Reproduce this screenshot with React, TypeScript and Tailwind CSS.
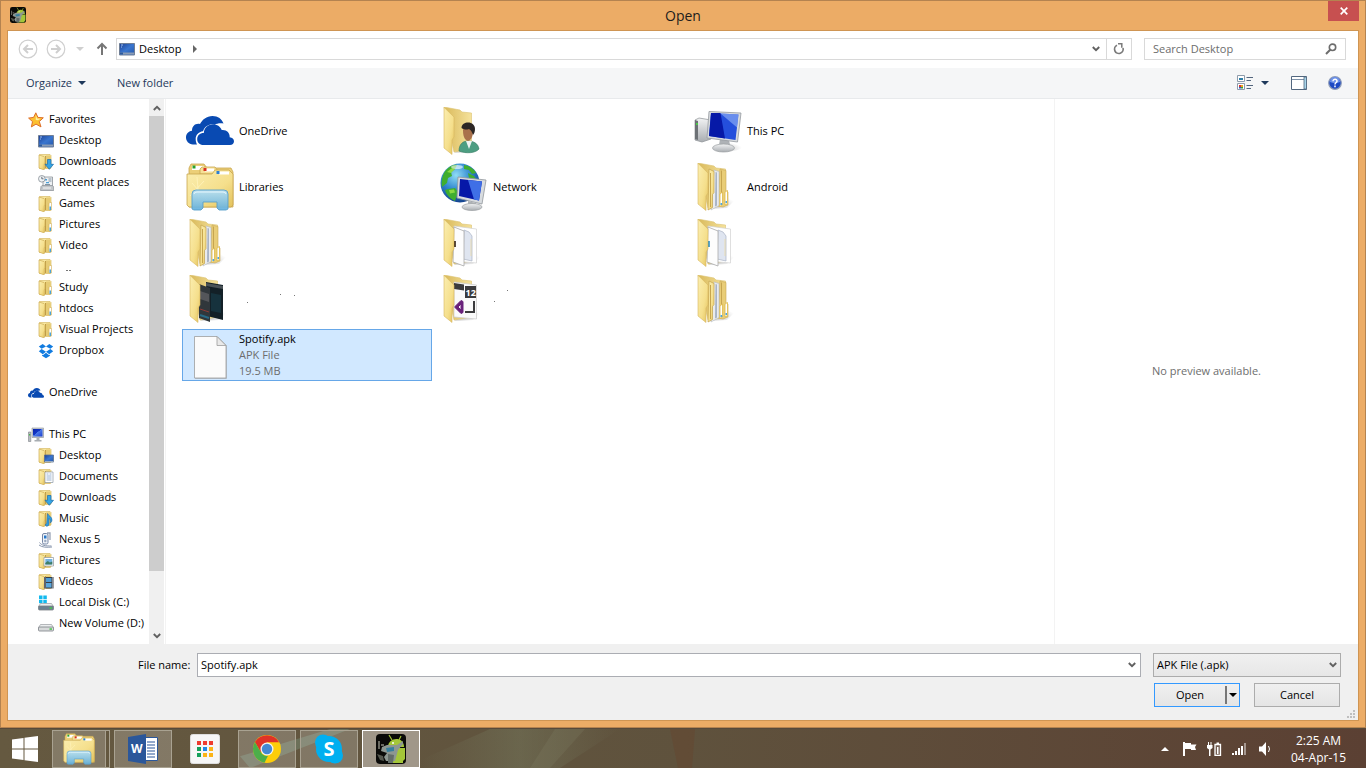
import React from 'react';
import clsx from 'clsx';

type IconProps = { className?: string };

const Defs: React.FC = () => (
  <svg width="0" height="0" className="absolute" aria-hidden="true">
    <defs>
      <linearGradient id="flap" x1="0" y1="0" x2="1" y2="1">
        <stop offset="0" stopColor="#fbeeb0" />
        <stop offset="0.6" stopColor="#f5df8c" />
        <stop offset="1" stopColor="#e3c25c" />
      </linearGradient>
      <linearGradient id="back" x1="0" y1="0" x2="1" y2="0">
        <stop offset="0" stopColor="#d9b95a" />
        <stop offset="1" stopColor="#f5e29c" />
      </linearGradient>
      <linearGradient id="screen" x1="0" y1="0" x2="1" y2="1">
        <stop offset="0" stopColor="#0a23a8" />
        <stop offset="0.45" stopColor="#1438c8" />
        <stop offset="0.46" stopColor="#4d7ae8" />
        <stop offset="1" stopColor="#1b3fd0" />
      </linearGradient>
      <linearGradient id="desk" x1="0" y1="0" x2="1" y2="1">
        <stop offset="0" stopColor="#1c3f94" />
        <stop offset="0.5" stopColor="#3a76cf" />
        <stop offset="1" stopColor="#2456a8" />
      </linearGradient>
      <linearGradient id="metal" x1="0" y1="0" x2="0" y2="1">
        <stop offset="0" stopColor="#f2f3f4" />
        <stop offset="1" stopColor="#a9adb1" />
      </linearGradient>
      <linearGradient id="glass" x1="0" y1="0" x2="0" y2="1">
        <stop offset="0" stopColor="#b5dff3" />
        <stop offset="1" stopColor="#62b0de" />
      </linearGradient>
      <radialGradient id="globe" cx="0.4" cy="0.3" r="0.75">
        <stop offset="0" stopColor="#8fdcf5" />
        <stop offset="0.5" stopColor="#2f86cf" />
        <stop offset="1" stopColor="#103a86" />
      </radialGradient>
      <radialGradient id="shade" cx="0.2" cy="0.7" r="0.8">
        <stop offset="0" stopColor="#8a8a8a" stopOpacity="0.5" />
        <stop offset="1" stopColor="#8a8a8a" stopOpacity="0" />
      </radialGradient>
    </defs>
  </svg>
);

/* ---------- 16px icons ---------- */

const SmallFolder: React.FC<{ children?: React.ReactNode }> = ({ children }) => (
  <svg viewBox="0 0 16 16" className="size-4 shrink-0">
    <path d="M1.500.500h10.500l1 1v12.500l-1 .5H1.500z" fill="url(#flap)" stroke="#d8bb68" strokeWidth=".7" />
    <path d="M8 1.500h4.500v12.500H8z" fill="#e6cb74" />
    <path d="M7.500 2v12" stroke="#bf9d47" />
    <path d="M1 1 6 2.500l1 1v5.500l-.7.8v5.700H5L1 14z" fill="url(#flap)" stroke="#cfae55" strokeWidth=".7" />
    {children || (
      <>
        <path d="M11 7.500 12 6.500h1.500V14H11z" fill="#fff" stroke="#d3b25c" strokeWidth=".6" />
        <path d="M11.500 10.500H13V14h-1.500z" fill="#4aa3d8" />
      </>
    )}
  </svg>
);

const StarIcon = () => (
  <svg viewBox="0 0 16 16" className="size-4 shrink-0">
    <path d="M7.800.8 9.900 5.400l5.400.4-4 3.700 1.700 5.400-5-2.800-4.600 2.800 1.100-5.300L.6 6.100l5-.7z" fill="#fcc030" stroke="#dd6f2a" strokeWidth="1" strokeLinejoin="round" />
    <path d="m7.800 3 1.300 3.400 3.500.3-2.700 1.600L7.800 8z" fill="#fff0a0" />
  </svg>
);

const DesktopIcon = () => (
  <svg viewBox="0 0 16 16" className="size-4 shrink-0">
    <path d="M.5 2.500h15v11.500H.5z" fill="url(#desk)" stroke="#707f96" />
    <path d="M1 11.500h14v2H1z" fill="#8b9cb4" />
    <path d="M1 11.500h3v2H1z" fill="#2d5b9e" />
    <path d="M2 3.500h2v1H2zM2 5.500h1v1H2z" fill="#a3c3f0" />
  </svg>
);

const DownArrow = () => (
  <path d="M9.500 5.500h3.500v4.800h2.500L11.300 15.300 7 10.300h2.500z" fill="#35a5e5" stroke="#1a6cab" strokeWidth=".7" />
);

const RecentIcon = () => (
  <svg viewBox="0 0 16 16" className="size-4 shrink-0">
    <path d="M5 2h9.500v10H5z" fill="#eef1f4" stroke="#8b9298" strokeWidth=".8" />
    <path d="M7 4h2v1.500H7zM8 7h3v1.200H8z" fill="#4aa0d6" />
    <path d="M10.500 4h3M10.500 6h3M7 9.500h5" stroke="#8394a3" />
    <path d="m3 11.500 1-1h10.500l1.200 1.500v3.500H2.500z" fill="#c2c6ca" stroke="#888e93" strokeWidth=".7" />
    <path d="M5 13h8" stroke="#f7f7f7" />
    <circle cx="3.800" cy="3.800" r="3.300" fill="#f1f4f6" stroke="#888f97" strokeWidth=".8" />
    <path d="M3.800 1.800v2h1.700" fill="none" stroke="#46525f" strokeWidth=".8" />
  </svg>
);

const DropboxIcon = () => (
  <svg viewBox="0 0 16 16" className="size-4 shrink-0" fill="#127ce0">
    <path d="M4.700 1 .8 3.600l2.800 2.200L8 3.500zM11.300 1l3.900 2.600-2.800 2.200L8 3.500zM.8 8.200l2.800-2.100L8 8.700 4.700 11.300zM15.200 8.200l-2.800-2.100L8 8.700l3.300 2.600zM4 11.800l.8.500L8 9.700l3.200 2.600.8-.5v1L8 15.200l-4-2.400z" />
  </svg>
);

const CloudIcon: React.FC<IconProps> = ({ className }) => (
  <svg viewBox="0 0 48 48" className={clsx('shrink-0', className)} fill="#094ab2">
    <path d="M11 37.500H7C2.500 37 0 34 0 30.500c0-3.500 2.300-6.400 6-6.800C6 19 9.500 16 14 17c2.300-4.300 6.500-8 12.500-8 5.500 0 9.500 3 11 7.500-4-.5-7 .2-8.800 1.200-3.800-1.200-9.500.6-11.700 6.600-4.500.5-7.500 4-7.300 8 0 2 .5 3.800 1.300 5.200z" />
    <path d="M17.500 38c-4 0-6.300-2.700-6.300-5.800 0-3.600 2.800-6.200 6.600-6.100C18 21 22 17.300 27 17.300c4 0 7.500 2.300 8.700 5.700 4.800-.6 8.300 2.800 8 7.200 2.600.3 4.300 1.800 4.300 4 0 2.300-1.600 3.800-4 3.800z" />
  </svg>
);

const SmallPcIcon = () => (
  <svg viewBox="0 0 16 16" className="size-4 shrink-0">
    <path d="M.5 5h2.300v9.500H.5z" fill="#b8bcc0" stroke="#7c8186" strokeWidth=".6" />
    <path d="M1 7h1.300v1.500H1z" fill="#48b648" />
    <path d="M4 1h11.500v9.500H4z" fill="#c9cdd2" stroke="#8c9197" strokeWidth=".6" />
    <path d="M5 2h9.500v7.500H5z" fill="url(#screen)" />
    <path d="M8.500 11h3v2h2v1.500H6.500V13h2z" fill="#a8adb2" />
  </svg>
);

const NexusIcon = () => (
  <svg viewBox="0 0 16 16" className="size-4 shrink-0">
    <path d="M9 1h3v7" fill="none" stroke="#98a3b5" strokeWidth="1.300" />
    <rect x="4.500" y="1.500" width="5.500" height="10.500" rx="1.500" fill="#eef2f8" stroke="#7687a5" />
    <path d="M6 3.500h2.500v3H6z" fill="#2778c9" />
    <circle cx="7.300" cy="9" r="1.200" fill="#9aa9bf" />
    <path d="M1.500 10.500c2 3 6 3.500 12 3.500M1 13c3 2.500 8 2.500 13 2" fill="none" stroke="#8896ae" />
  </svg>
);

const DiskIcon: React.FC<{ system?: boolean }> = ({ system }) => (
  <svg viewBox="0 0 16 16" className="size-4 shrink-0">
    {system && <path d="M1 .5h3.500V4H1zM5.300.5h3.500V4H5.300zM1 4.800h3.500v3.500H1zM5.300 4.800h3.500v3.500H5.300z" fill="#12b9ee" />}
    <path d="m.5 11.500 2-3h11l2 3z" fill="#eceeef" stroke="#8a8e92" strokeWidth=".6" />
    <rect x=".5" y="11" width="15" height="4" rx="1" fill={system ? '#6c8190' : '#d8dadb'} stroke="#7b8085" strokeWidth=".8" />
    <path d="M11.500 12.300h2.500v1.500h-2.500z" fill="#46c84a" />
  </svg>
);

const DocOverlay = () => (
  <>
    <path d="M7 3h8v10.500H7z" fill="#fff" stroke="#8d99a8" strokeWidth=".7" />
    <path d="M8.500 5h2M8.500 7h5M8.500 9h5M8.500 11h5M11.500 5h2" stroke="#7da0c8" strokeWidth=".8" />
  </>
);

const MusicOverlay = () => (
  <path d="M9.500 2.500c1 2.500 4.500 3 4.500 6.500 0 1.500-1 2.500-1.800 3 .5-2 0-3.500-1.200-4.500v5.500c0 1.500-1.200 2.300-2.500 2.200-1.500-.2-1.700-2 .2-2.700z" fill="#2f9de0" stroke="#185f9e" strokeWidth=".5" />
);

const PictureOverlay = () => (
  <>
    <path d="M6 4.500h9.500V13H6z" fill="#fff" stroke="#8f969c" strokeWidth=".7" />
    <path d="M7.300 6h7v5.500h-7z" fill="#71b3e2" />
    <path d="m7.300 10 2.500-2 2 1.500 2.500-1v3h-7z" fill="#3d7d6a" />
  </>
);

const VideoOverlay = () => (
  <>
    <path d="M6 3h9.500v11.500H6z" fill="#383e46" />
    <path d="M8 4h5.500v4H8z" fill="#4d9bd4" />
    <path d="M8 9h5.500v4.500H8z" fill="#5aa7dc" />
    <path d="M7 3.500v11M14.500 3.500v11" stroke="#d6dbe0" strokeDasharray="1 1" />
  </>
);

const DesktopOverlay = () => (
  <>
    <path d="M6.500 7h9v7h-9z" fill="url(#desk)" stroke="#5c708e" strokeWidth=".8" />
    <path d="M7 13h8.500v1H7z" fill="#9aacc3" />
  </>
);

/* ---------- 48px icons ---------- */

const BigFolder: React.FC<{ children?: React.ReactNode }> = ({ children }) => (
  <svg viewBox="0 0 48 48" className="size-12 shrink-0">
    <path d="m14 46 16-12 12 2-9 9z" fill="url(#shade)" />
    <path d="m4 0 16 3 2 2 9.500 1v36l-17.500 3z" fill="url(#back)" stroke="#dcc271" strokeWidth=".6" />
    {children}
    <path d="m4 .3 10 9.700v20l-2 3v14.500L4 41z" fill="url(#flap)" stroke="#d6b75f" strokeWidth=".6" strokeLinejoin="round" />
  </svg>
);

const NestedFolders = () => (
  <>
    <path d="m26 6 6 1.500V28l2 1v13l-5 2-5-1z" fill="#e9cd77" stroke="#c9aa55" strokeWidth=".6" />
    <path d="m20 7 5 1.500v34L17 47z" fill="#e9ebee" stroke="#b9bdc2" strokeWidth=".6" />
    <path d="m21.500 9 1.500.5v33l-2 1z" fill="#a9b4c6" />
    <path d="m15 6 5 2.500v21l-1.500 2v13L14 47z" fill="url(#flap)" stroke="#c4a44e" strokeWidth=".7" />
    <path d="M16.500 10v34M27.500 7.500V30" stroke="#c6a550" />
    <path d="m26 31 2.500-2v13L26 43.500zM31 29l2.500-1.500v13L31 42z" fill="#fff" stroke="#e0ba48" strokeWidth=".8" />
    <path d="M26.500 40h1.700v2h-1.700zM31.500 38h1.500v2h-1.500z" fill="#4ba5e0" />
  </>
);

const Papers: React.FC<{ accent: string }> = ({ accent }) => (
  <>
    <path d="m14 7 22.500 3v34L14 42z" fill="#fff" stroke="#d1d1d1" strokeWidth=".7" />
    <path d="m24 11 5 2 3 4v25l-9-2z" fill="#dfe5f0" stroke="#aab3c4" strokeWidth=".7" />
    <path d="m14 8 10 4v35L13 43z" fill="#fdfdfd" stroke="#a9a9a9" strokeWidth=".8" />
    <path d="M14 22h1.800v6H14z" fill={accent} />
    <path d="M31 20v17" stroke="#ecdca6" strokeWidth=".8" />
  </>
);

const PhotoPages = () => (
  <>
    <path d="m20 7 17 3v35l-16-4z" fill="#132027" />
    <path d="m20 8 17 3v3L20 11z" fill="#4a5358" />
    <path d="m25 18 10 2v18l-10-2z" fill="#16323d" />
    <path d="m13 9 11 4v34l-11-4z" fill="#30373b" />
    <path d="m14 16 9 3v8l-9-3z" fill="#54565a" />
    <path d="m14 34 9 3" stroke="#8f3a35" />
    <path d="m14 40 9 3" stroke="#286a85" strokeWidth="2" />
  </>
);

const VisualStudioPage = () => (
  <>
    <path d="m14 7 22.500 3v34L14 42z" fill="#fafafa" stroke="#c9c9c9" strokeWidth=".7" />
    <path d="m14 8 10 1.500v6L14 14z" fill="#3b3b3d" />
    <path d="M25 11h11v12H25z" fill="#3b3b3d" />
    <text x="25.500" y="20.500" fontSize="9" fontWeight="700" fill="#fff" fontFamily="Open Sans, sans-serif">12</text>
    <path d="M34 26v11H25" fill="none" stroke="#3b3b3d" strokeWidth="2" />
    <path d="m15 31.500 6-6 2 1v11l-2 1-6-6zm6-2.500-3 3 3 3z" fill="#68217a" fillRule="evenodd" stroke="#68217a" />
  </>
);

const PersonOverlay = () => (
  <>
    <path d="M19 44c0-7 4-10 9-10s10 2 11 8c-3 4-13 5-20 2z" fill="#4d9e82" stroke="#327a61" strokeWidth=".6" />
    <path d="m26 34 3 8 3-8z" fill="#eef3f1" />
    <path d="M23 23c0-5 9-5 10 0 0 5-1 10-5 11-4-1-5-6-5-11z" fill="#a9714b" />
    <path d="M21.500 21c0-4 3.500-5.500 6.500-5.500 4 0 7 2.500 7 6.500 0 3-1 5-2 6-1-3-2-5-4-6-3 1-5 .5-7.500-1z" fill="#2c2725" />
  </>
);

const LibrariesIcon: React.FC<IconProps> = ({ className }) => (
  <svg viewBox="0 0 48 48" className={clsx('shrink-0', className)}>
    <path d="M3 44V5l2-4h13l3 4h24l2 4v35z" fill="#eccf78" stroke="#c9a64e" strokeWidth=".8" />
    <path d="M6 3h12v4H6z" fill="#fff" />
    <path d="M6.500 2.500h3v3h-3z" fill="#2ba02b" />
    <path d="M14 9V6l2-2h13l3 4v3H14z" fill="#f6e096" stroke="#c9a64e" strokeWidth=".8" />
    <path d="M19 5.500h9v3h-9z" fill="#fff" />
    <path d="M17.500 5h3v3h-3z" fill="#d9321f" />
    <path d="M1 11h25l3-4h14l4 4v31l-2 2H3l-2-2z" fill="url(#flap)" stroke="#c9a64e" strokeWidth=".8" />
    <path d="M33 8.500h10v3H33z" fill="#fff" />
    <path d="M30.500 8h3v3h-3z" fill="#2d7fd1" />
    <path d="m4 33 14-15M6 20l15 17M11 14l2 24" stroke="#fff4be" strokeWidth=".8" />
    <path d="M6 46V31q0-4 4-4h28q4 0 4 4v15l-2 1h-7l-2-2v-6H17v6l-2 2H8z" fill="url(#glass)" stroke="#5a9fca" strokeWidth=".9" fillOpacity=".93" />
    <path d="M8 31q0-2 3-2h26q3 0 3 2" fill="none" stroke="#e6f7ff" />
  </svg>
);

const ThisPcIcon = () => (
  <svg viewBox="0 0 48 48" className="size-12 shrink-0">
    <ellipse cx="36" cy="40" rx="12" ry="4" fill="url(#shade)" />
    <path d="m1 13 4-2 12 2v19l-9 3-7-2z" fill="url(#metal)" stroke="#8b8f93" strokeWidth=".7" />
    <path d="m1 13 3 1v19l-3-1z" fill="#6c7175" />
    <path d="M2 16h2v2H2z" fill="#4dc74a" />
    <path d="m26 32 9 1 1 5H25z" fill="#aeb2b6" />
    <path d="m15 4.500 32 1.500-3.500 29L13 31z" fill="#d9dcdf" stroke="#94999e" strokeWidth=".8" />
    <path d="m17 6 27.500 1.500L41.500 33 15 29z" fill="#244fdc" />
    <path d="M17 6h9.500l4.500 25.400L15 29z" fill="#0619a7" />
    <path d="m26.500 6.500 18 1-1.500 13z" fill="#87a9f3" fillOpacity=".7" />
    <ellipse cx="29.500" cy="41" rx="11" ry="4" fill="url(#metal)" stroke="#999da1" strokeWidth=".7" />
  </svg>
);

const NetworkIcon = () => (
  <svg viewBox="0 0 48 48" className="size-12 shrink-0">
    <circle cx="20" cy="20" r="19.500" fill="url(#globe)" />
    <path d="M4 10C8 4 13 1 17 2l-2 4-4 3 1 4-4 2-1 5-5 4c-1-4 0-10 2-14zM24 2c6 1 10 4 12 8l-4 1-3-4-5-1zM8 26l7-1 3 4-3 9c-5-2-9-7-10-11zM28 10l6 3 2 3-7-1z" fill="#3fae2f" />
    <path d="M7 9 12 5l3 1-4 4zM9 27l5-.5 1 3-5 1z" fill="#8bd943" />
    <ellipse cx="17" cy="4" rx="6" ry="2" fill="#fff" fillOpacity=".6" />
    <path d="m18 14 28 3-4 24-25-6z" fill="#d8dce0" stroke="#92979c" strokeWidth=".8" />
    <path d="m20 16 22 2.500-3 19L19 33z" fill="#0618a8" />
    <path d="m28 17 14 1.500-3 19-5-1z" fill="#3f6fe6" />
    <path d="m28 38 8 2v4h-8z" fill="#aeb2b6" />
    <ellipse cx="32" cy="44" rx="10" ry="3.500" fill="url(#metal)" stroke="#999da1" strokeWidth=".7" />
  </svg>
);

const BlankFileIcon = () => (
  <svg viewBox="0 0 48 48" className="size-12 shrink-0">
    <path d="M9 6h23l9 9v33H9z" fill="#9c9c9c" fillOpacity=".5" />
    <path d="M8.500 5.500h22.500l9 9v32.500H8.500z" fill="#fbfbfb" stroke="#9d9d9d" strokeWidth=".8" />
    <path d="M31 5.500v9h9z" fill="#e9e9e9" stroke="#9d9d9d" strokeWidth=".8" />
  </svg>
);

const AppIcon: React.FC<IconProps> = ({ className }) => (
  <svg viewBox="0 0 30 30" className={clsx('shrink-0', className)}>
    <rect width="30" height="30" rx="4" fill="#0a0a08" />
    <path d="M3 7v8M5 11h3" stroke="#c7c7ba" />
    <path d="m13 1 3 5M25 2l-2 4" stroke="#a4c639" strokeWidth="1.200" />
    <path d="M12 13c0-10 16-11 16 0z" fill="#a4c639" />
    <path d="M13 14h16v11l-2 2v2H14z" fill="#a4c639" />
    <path d="m6 13 5-2h10l6-4v3l-5 6-3 11h-9l-2-4 3-4-6-2z" fill="#8d9791" />
    <path d="m10 14 8-1v4l-7 1z" fill="#367f9d" />
    <path d="m12 20 6 1-1 8h-5z" fill="#636d69" />
    <path d="m1 20 6 2 1 5-4-1z" fill="#55584f" />
    <circle cx="17" cy="9" r="1" fill="#fff" />
  </svg>
);

/* ---------- small glyphs ---------- */

const Chevron: React.FC<IconProps & { up?: boolean }> = ({ className, up }) => (
  <svg viewBox="0 0 8 6" className={clsx('h-1.5 w-2', className)}>
    <path d={up ? 'M.8 5 4 1.800 7.200 5' : 'M.8 1 4 4.200 7.200 1'} fill="none" stroke="#606060" strokeWidth="1.900" />
  </svg>
);

const Triangle: React.FC<IconProps> = ({ className }) => (
  <svg viewBox="0 0 8 4" className={clsx('h-1 w-2', className)}>
    <path d="M0 0h8L4 4z" fill="currentColor" />
  </svg>
);

// Leftover dots of the hidden labels
const Specks: React.FC<{ points: number[][] }> = ({ points }) => (
  <svg viewBox="0 0 80 20" className="h-5 w-20" shapeRendering="crispEdges" aria-hidden="true">
    {points.map(([x, y]) => (
      <rect key={`${x}-${y}`} x={x} y={y} width="1" height="1" fill="#777" />
    ))}
  </svg>
);

type TreeItem = { label: string; icon: React.ReactNode; root?: boolean };

const tree: TreeItem[][] = [
  [
    { label: 'Favorites', icon: <StarIcon />, root: true },
    { label: 'Desktop', icon: <DesktopIcon /> },
    { label: 'Downloads', icon: <SmallFolder><DownArrow /></SmallFolder> },
    { label: 'Recent places', icon: <RecentIcon /> },
    { label: 'Games', icon: <SmallFolder /> },
    { label: 'Pictures', icon: <SmallFolder /> },
    { label: 'Video', icon: <SmallFolder /> },
    { label: '', icon: <SmallFolder /> },
    { label: 'Study', icon: <SmallFolder /> },
    { label: 'htdocs', icon: <SmallFolder /> },
    { label: 'Visual Projects', icon: <SmallFolder /> },
    { label: 'Dropbox', icon: <DropboxIcon /> },
  ],
  [{ label: 'OneDrive', icon: <CloudIcon className="size-4" />, root: true }],
  [
    { label: 'This PC', icon: <SmallPcIcon />, root: true },
    { label: 'Desktop', icon: <SmallFolder><DesktopOverlay /></SmallFolder> },
    { label: 'Documents', icon: <SmallFolder><DocOverlay /></SmallFolder> },
    { label: 'Downloads', icon: <SmallFolder><DownArrow /></SmallFolder> },
    { label: 'Music', icon: <SmallFolder><MusicOverlay /></SmallFolder> },
    { label: 'Nexus 5', icon: <NexusIcon /> },
    { label: 'Pictures', icon: <SmallFolder><PictureOverlay /></SmallFolder> },
    { label: 'Videos', icon: <SmallFolder><VideoOverlay /></SmallFolder> },
    { label: 'Local Disk (C:)', icon: <DiskIcon system /> },
    { label: 'New Volume (D:)', icon: <DiskIcon /> },
  ],
];

type FileItem = {
  label?: string;
  details?: string[];
  icon: React.ReactNode;
  specks?: number[][];
  selected?: boolean;
};

const files: FileItem[] = [
  { label: 'OneDrive', icon: <CloudIcon className="size-12" /> },
  { icon: <BigFolder><PersonOverlay /></BigFolder> },
  { label: 'This PC', icon: <ThisPcIcon /> },
  { label: 'Libraries', icon: <LibrariesIcon className="size-12" /> },
  { label: 'Network', icon: <NetworkIcon /> },
  { label: 'Android', icon: <BigFolder><NestedFolders /></BigFolder> },
  { icon: <BigFolder><NestedFolders /></BigFolder> },
  { icon: <BigFolder><Papers accent="#2b1b12" /></BigFolder> },
  { icon: <BigFolder><Papers accent="#2c8fc4" /></BigFolder> },
  { icon: <BigFolder><PhotoPages /></BigFolder>, specks: [[8, 13], [41, 5], [55, 6]] },
  { icon: <BigFolder><VisualStudioPage /></BigFolder>, specks: [[14, 1], [1, 12]] },
  { icon: <BigFolder><NestedFolders /></BigFolder> },
  { label: 'Spotify.apk', details: ['APK File', '19.5 MB'], icon: <BlankFileIcon />, selected: true },
];

const TitleBar = () => (
  <header className="relative flex h-[29px] items-center justify-center">
    <AppIcon className="absolute left-[3px] top-1.5 size-4" />
    <h1 className="text-sm text-[#1c1c1c]">Open</h1>
    <button type="button" aria-label="Close" className="absolute right-0 top-0 flex h-5 w-[31px] items-center justify-center bg-[#c75050]">
      <svg viewBox="0 0 8 8" className="size-2">
        <path d="m.7.7 6.600 6.600M7.300.7.7 7.300" stroke="#fff" strokeWidth="1.700" />
      </svg>
    </button>
  </header>
);

const RoundArrow: React.FC<{ label: string; forward?: boolean }> = ({ label, forward }) => (
  <button type="button" aria-label={label} className="size-5">
    <svg viewBox="0 0 20 20" className="size-5" fill="none" stroke="#cfcfcf">
      <circle cx="10" cy="10" r="8.800" strokeWidth="1.200" />
      <path d={forward ? 'M5 10h9M10 6l4 4-4 4' : 'M15 10H6M10 6l-4 4 4 4'} strokeWidth="2" />
    </svg>
  </button>
);

const NavBar = () => (
  <div className="flex h-9 items-center pl-2.5 pr-3">
    <div className="flex w-[98px] items-center">
      <RoundArrow label="Back" />
      <span className="w-2" />
      <RoundArrow label="Forward" forward />
      <button type="button" aria-label="Recent locations" className="ml-2 px-0.5 text-[#cfcfcf]">
        <Triangle />
      </button>
      <button type="button" aria-label="Up" className="ml-2.5">
        <svg viewBox="0 0 12 14" className="h-3.5 w-3" fill="none" stroke="#767676" strokeWidth="2">
          <path d="M6 13V2M1.500 6.500 6 2l4.500 4.500" />
        </svg>
      </button>
    </div>
    <div className="flex h-[22px] flex-1 items-center border border-[#d9d9d9] bg-white">
      <button type="button" className="flex items-center gap-1 pl-0.5">
        <DesktopIcon />
        <span>Desktop</span>
        <svg viewBox="0 0 4 8" className="ml-2 h-2 w-1">
          <path d="m0 0 4 4-4 4z" fill="#666" />
        </svg>
      </button>
      <button type="button" aria-label="Previous locations" className="ml-auto flex h-full w-5 items-center justify-center">
        <Chevron />
      </button>
      <button type="button" aria-label="Refresh" className="flex h-full w-[25px] items-center justify-center border-l border-[#d9d9d9]">
        <svg viewBox="0 0 12 12" className="size-3" fill="none" stroke="#7a7a7a" strokeWidth="1.700">
          <path d="M4 2.300A4.300 4.300 0 1 0 10 5" />
          <path d="M5 .8h3.800v4" strokeWidth="1.500" />
        </svg>
      </button>
    </div>
    <div className="ml-3 flex h-[22px] w-[202px] items-center border border-[#d9d9d9] bg-white px-2">
      <input
        type="search"
        aria-label="Search Desktop"
        placeholder="Search Desktop"
        className="min-w-0 flex-1 outline-none placeholder:text-[#6d6d6d]"
      />
      <svg viewBox="0 0 12 12" className="size-3" fill="none" stroke="#6d6d6d">
        <circle cx="7.500" cy="4.300" r="3.200" strokeWidth="1.600" />
        <path d="M5.200 6.800 1 11" strokeWidth="2" />
      </svg>
    </div>
  </div>
);

const Toolbar = () => (
  <div className="mt-px flex h-[31px] items-center border-b border-[#e8eaec] bg-[#f5f6f7] pl-[18px] pr-4 text-[#1e395b]">
    <button type="button" className="flex items-center gap-1.5">
      Organize <Triangle />
    </button>
    <button type="button" className="ml-[31px]">New folder</button>
    <button type="button" aria-label="Change your view" className="ml-auto flex items-center gap-2">
      <svg viewBox="0 0 16 16" className="size-4">
        <path d="M.5.500h7v6h-7zM.5 8.500h7v6h-7z" fill="#fff" stroke="#8d9bab" />
        <path d="M2 3h4v2H2z" fill="#2e7fa8" />
        <path d="M2 10h2v2H2z" fill="#d33" />
        <path d="M4 10h2v2H4z" fill="#e5a620" />
        <path d="M2 12h2v1.500H2z" fill="#2b57c7" />
        <path d="M4 12h2v1.500H4z" fill="#3a9d3a" />
        <path d="M9.500 2.500H16M9.500 5.500H14M9.500 10.500H16M9.500 13.500H14" stroke="#53657d" />
      </svg>
      <Triangle />
    </button>
    <button type="button" aria-label="Show the preview pane" className="ml-[22px]">
      <svg viewBox="0 0 16 14" className="h-3.5 w-4">
        <path d="M.5.500h15v13H.5z" fill="#fff" stroke="#52677f" />
        <path d="M1 3.500h12" stroke="#7d91a8" />
        <path d="M13 1h2.500v12H13z" fill="#a8d5ea" stroke="#52677f" strokeWidth=".8" />
      </svg>
    </button>
    <button type="button" aria-label="Get help" className="ml-[21px]">
      <svg viewBox="0 0 14 14" className="size-3.5">
        <circle cx="7" cy="7" r="6.300" fill="#1d49c4" stroke="#8f9db8" strokeWidth="1.200" />
        <path d="M2 6a5 5 0 0 1 10 0C9 7.500 5 7.500 2 6z" fill="#6d92ea" />
        <path d="M5 5.200C5 2.600 9.200 2.700 9 5.200 8.900 6.600 7 6.500 7 8.500M7 9.600v1.600" fill="none" stroke="#fff" strokeWidth="1.500" />
      </svg>
    </button>
  </div>
);

const Sidebar = () => (
  <aside className="flex w-[158px] shrink-0 border-r border-[#f3f3f3] pr-px">
    <nav className="min-w-0 flex-1 overflow-hidden pt-2.5" aria-label="Folders">
      {tree.map((group) => (
        <ul key={group[0].label} className="mb-[21px] last:mb-0">
          {group.map((item) => (
            <li key={item.label}>
              <a
                href="#"
                aria-label={item.label || 'Folder'}
                className={clsx('flex h-[21px] items-center gap-[5px] whitespace-nowrap', item.root ? 'pl-5' : 'pl-[30px]')}
              >
                {item.icon}
                {item.label || <Specks points={[[7, 13], [8, 13], [10, 13], [11, 13]]} />}
              </a>
            </li>
          ))}
        </ul>
      ))}
    </nav>
    <div className="flex w-[15px] shrink-0 flex-col bg-[#f0f0f0]">
      <button type="button" aria-label="Scroll up" className="flex h-[17px] items-center justify-center">
        <Chevron up />
      </button>
      <div className="flex-1">
        <div className="h-[89%] bg-[#cdcdcd]" />
      </div>
      <button type="button" aria-label="Scroll down" className="flex h-[17px] items-center justify-center">
        <Chevron />
      </button>
    </div>
  </aside>
);

const FileList = () => (
  <main className="min-w-0 flex-1 pl-4 pt-1.5">
    <ul className="grid grid-cols-[repeat(auto-fill,250px)] gap-1">
      {files.map((file, i) => (
        <li key={i}>
          <button
            type="button"
            aria-label={file.label || 'Folder'}
            className={clsx(
              'flex h-[52px] w-full items-center gap-[5px] border pl-[3px] text-left',
              file.selected ? 'border-[#66a7e8] bg-[#d1e8ff]' : 'border-transparent'
            )}
          >
            {file.icon}
            <span className="flex flex-col leading-4">
              {file.label}
              {file.details?.map((line) => (
                <span key={line} className="text-[#6d6d6d]">{line}</span>
              ))}
              {file.specks && <Specks points={file.specks} />}
            </span>
          </button>
        </li>
      ))}
    </ul>
  </main>
);

const Footer = () => (
  <form className="relative bg-[#f0f0f0] pb-[13px] pl-[130px] pr-[17px] pt-[9px]" onSubmit={(e) => e.preventDefault()}>
    <div className="flex items-center">
      <label htmlFor="file-name" className="w-[59px] whitespace-nowrap">File name:</label>
      <div className="flex h-6 flex-1 items-center border border-[#abadb3] bg-white pl-[3px] pr-1">
        <input id="file-name" type="text" defaultValue="Spotify.apk" className="min-w-0 flex-1 outline-none" />
        <button type="button" aria-label="Show file names">
          <Chevron />
        </button>
      </div>
      <div className="relative ml-3 w-[188px]">
        <select aria-label="File type" className="block h-6 w-full appearance-none border border-[#acacac] bg-gradient-to-b from-[#f0f0f0] to-[#e7e7e7] px-[3px]">
          <option>APK File (.apk)</option>
        </select>
        <Chevron className="pointer-events-none absolute right-1 top-[9px]" />
      </div>
    </div>
    <div className="mt-1.5 flex justify-end gap-3.5 pr-px">
      <div className="flex h-6 w-[86px] border border-[#3399ff] bg-gradient-to-b from-[#f0f0f0] to-[#e5e5e5]">
        <button type="submit" className="flex-1">Open</button>
        <button type="button" aria-label="More open options" className="my-0.5 flex w-3.5 items-center justify-center border-l-2 border-[#777] text-black">
          <Triangle className="shrink-0" />
        </button>
      </div>
      <button type="button" className="h-6 w-[86px] border border-[#acacac] bg-gradient-to-b from-[#f0f0f0] to-[#e5e5e5]">
        Cancel
      </button>
    </div>
    <svg viewBox="0 0 8 8" className="absolute bottom-0.5 right-[3px] size-2" fill="#bfbfbf">
      <path d="M6 0h2v2H6zM3 3h2v2H3zM6 3h2v2H6zM0 6h2v2H0zM3 6h2v2H3zM6 6h2v2H6z" />
    </svg>
  </form>
);

const TaskButton: React.FC<{ label: string; active?: boolean; className?: string; children: React.ReactNode }> = ({
  label,
  active,
  className,
  children,
}) => (
  <button
    type="button"
    aria-label={label}
    className={clsx(
      'flex h-[38px] items-center justify-center border',
      active ? 'border-white bg-[#a09789]' : 'border-[#a9a291] bg-white/20',
      className || 'w-[58px]'
    )}
  >
    {children}
  </button>
);

const Taskbar = () => (
  <footer className="relative flex h-10 items-center border-t border-[#57493a] bg-gradient-to-r from-[#655940] via-[#5f523d] to-[#5b4033] text-white">
    <svg viewBox="0 0 1366 40" preserveAspectRatio="none" className="absolute inset-0 h-full w-full" aria-hidden="true">
      <defs>
        <linearGradient id="streak" x1="0" y1="0" x2="1" y2="0">
          <stop offset="0" stopColor="#74775c" stopOpacity="0" />
          <stop offset=".5" stopColor="#74775c" stopOpacity=".5" />
          <stop offset="1" stopColor="#74775c" stopOpacity="0" />
        </linearGradient>
      </defs>
      <path d="M420 32 490 0h130l-60 40H420z" fill="url(#streak)" />
      <path d="M240 28 330 0h20l-100 40z" fill="#7fa08a" fillOpacity=".35" />
      <path d="m530 40 25-40h30l-35 40z" fill="#828467" fillOpacity=".22" />
      <path d="M670 0h25l-3 40h-14z" fill="#6a3f28" fillOpacity=".3" />
    </svg>
    <div className="relative flex flex-1 items-center">
      <button type="button" aria-label="Start" className="ml-3 mr-3.5 size-[26px]">
        <svg viewBox="0 0 26 26" className="size-[26px]" fill="#fff">
          <path d="M0 3.500 11.500 2v10.500H0zM12.500 1.800 26 0v12.500H12.500zM0 13.500h11.500V24L0 22.500zM12.500 13.500H26V26l-13.500-1.800z" />
        </svg>
      </button>
      <TaskButton label="File Explorer" className="w-[54px]">
        <LibrariesIcon className="size-8" />
      </TaskButton>
      <span className="mr-1 h-[38px] w-1 border-y border-r border-[#a9a291]" />
      <TaskButton label="Word">
        <svg viewBox="0 0 30 30" className="size-[30px]">
          <path d="M15 3.500h14.500v23H15z" fill="#fff" stroke="#2b579a" />
          <path d="M19 8h8M19 11h8M19 14h8M19 17h8M19 20h8M19 23h8" stroke="#2b579a" strokeWidth="1.200" />
          <path d="M0 3 18 0v30L0 27z" fill="#2b579a" />
          <text x="3" y="19" fontSize="12" fontWeight="700" fill="#fff" fontFamily="Open Sans, sans-serif">W</text>
        </svg>
      </TaskButton>
      <button type="button" aria-label="Chrome App Launcher" className="mx-[18px] size-[30px]">
        <svg viewBox="0 0 30 30" className="size-[30px]">
          <rect x=".5" y=".5" width="29" height="29" rx="2" fill="#f6f6f6" stroke="#ddd" />
          <path d="M7 7h4v4H7zM13 7h4v4h-4zM19 7h4v4h-4z" fill="#ee3b2f" />
          <path d="M7 13h4v4H7zM7 19h4v4H7z" fill="#14a05a" />
          <path d="M13 13h4v4h-4z" fill="#1f87e5" />
          <path d="M19 13h4v4h-4zM13 19h4v4h-4zM19 19h4v4h-4z" fill="#fbb417" />
        </svg>
      </button>
      <TaskButton label="Google Chrome">
        <svg viewBox="0 0 28 28" className="size-7">
          <circle cx="14" cy="14" r="14" fill="#fccd0a" />
          <path d="M1.900 7A14 14 0 0 1 26.100 7.200H14L8 17.500z" fill="#df3227" />
          <path d="M1.900 7 8 17.500c1.500 2.500 4 3.700 7 3.300L11.500 27.800A14 14 0 0 1 1.900 7z" fill="#4cae4a" />
          <circle cx="14" cy="14" r="6.500" fill="#f3f3f3" />
          <circle cx="14" cy="14" r="5.200" fill="#4488d2" />
        </svg>
      </TaskButton>
      <TaskButton label="Skype" className="mx-1 w-[58px]">
        <svg viewBox="0 0 30 30" className="size-[30px]">
          <circle cx="15" cy="15" r="13" fill="#00aff0" />
          <circle cx="9" cy="8.500" r="8" fill="#00aff0" />
          <circle cx="21" cy="21.500" r="8" fill="#00aff0" />
          <text x="15" y="22" textAnchor="middle" fontSize="20" fontWeight="700" fill="#fff" fontFamily="Open Sans, sans-serif">S</text>
        </svg>
      </TaskButton>
      <TaskButton label="APK Installer" active>
        <AppIcon className="size-[30px]" />
      </TaskButton>
    </div>
    <div className="relative flex items-center pr-5">
      <button type="button" aria-label="Show hidden icons" className="mr-3.5">
        <Triangle className="rotate-180" />
      </button>
      <svg viewBox="0 0 14 14" className="mr-2.5 size-3.5" fill="#fff">
        <path d="M0 0h2v14H0zM2 1h6v1.500h5.500L12 5l1 3H8V7H2z" />
      </svg>
      <svg viewBox="0 0 15 14" className="mr-2.5 h-3.5 w-[15px]">
        <path d="M1.500 0v3M4 0v3" stroke="#fff" />
        <path d="M0 3h5.500v3l-2 1.500V14H2V7.500L0 6z" fill="#fff" />
        <path d="M8 2.500h5.500v11H8z" fill="#fff" fillOpacity=".15" stroke="#fff" strokeWidth="1.300" />
        <path d="M9.500.500h2.500v2H9.500zM10 5h1.500v7H10z" fill="#fff" />
      </svg>
      <svg viewBox="0 0 15 12" className="mr-3 h-3 w-[15px]" fill="#fff">
        <path d="M0 10h2v2H0zM3 8h2v4H3zM6 5h2v7H6zM9 3h2v9H9z" />
        <path d="M12 0h2v12h-2z" fillOpacity=".45" />
      </svg>
      <svg viewBox="0 0 12 14" className="mr-5 h-3.5 w-3">
        <path d="M0 4.500h3L7 0v14L3 9.500H0z" fill="#fff" />
        <path d="M9.500 4q2 3 0 6" fill="none" stroke="#fff" />
      </svg>
      <div className="text-center text-xs leading-[17px]">
        <div>2:25 AM</div>
        <div>04-Apr-15</div>
      </div>
    </div>
  </footer>
);

const App: React.FC = () => (
  <div className="flex min-h-screen flex-col font-['Open_Sans','Noto_Sans',sans-serif] text-[11px] text-black">
    <Defs />
    <div className="flex flex-1 flex-col border border-[#b48350] bg-[#ecac66] px-1.5 pb-1.5">
      <TitleBar />
      <div className="flex flex-1 flex-col border border-[#cf9553] bg-white">
        <NavBar />
        <Toolbar />
        <div className="flex flex-1">
          <Sidebar />
          <FileList />
          <section aria-label="Preview" className="flex w-[304px] shrink-0 items-center justify-center border-l border-[#f3f3f3] text-[#6d6d6d]">
            No preview available.
          </section>
        </div>
        <Footer />
      </div>
    </div>
    <Taskbar />
  </div>
);

export default App;
